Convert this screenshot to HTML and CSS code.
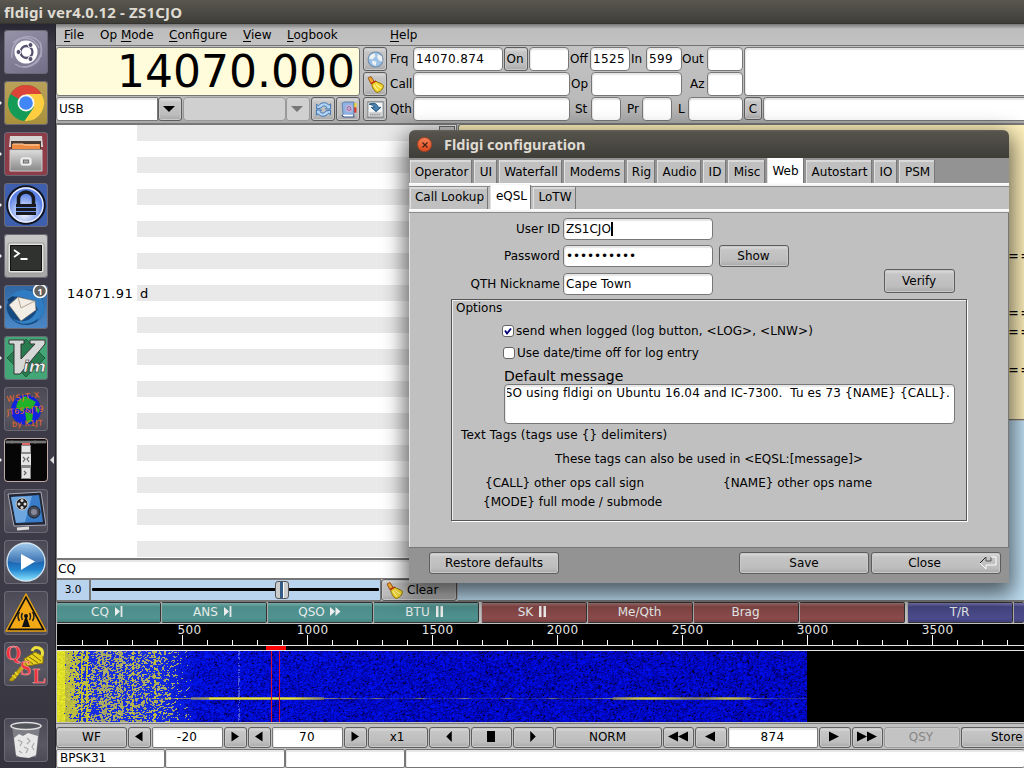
FILE: index.html
```html
<!DOCTYPE html>
<html lang="en">
<head>
<meta charset="utf-8">
<title>fldigi ver4.0.12 - ZS1CJO</title>
<link rel="stylesheet" href="styles.css">
</head>
<body>
<svg width="0" height="0" class="defs" aria-hidden="true">
  <defs>
    <symbol id="broom" viewBox="0 0 16 16">
      <path d="M1 1.800L3.800.5l3 4.800L3.500 7z" fill="#f2a52a" stroke="#8f4a10" stroke-width=".8"/>
      <path d="M4.300 7l4-2.200C10 6.500 13.500 6.500 15.500 9c0 3-2.500 5.800-6 6.500C7 14.500 4.800 11 4.300 7z" fill="#f1d52c" stroke="#8b6d08" stroke-width=".9"/>
      <path d="M6.500 8.500c1 2 2 3.500 4 5M8.500 7.500c1.500 2 3 3 5 3.500" stroke="#fff8a8" stroke-width="1" fill="none"/>
      <path d="M4 7.200l4.300-2.500" stroke="#c22a12" stroke-width="1.300"/>
    </symbol>
    <symbol id="left" viewBox="0 0 8 10"><path d="M7.500 0v10L0 5z"/></symbol>
    <symbol id="right" viewBox="0 0 8 10"><path d="M.5 0v10L8 5z"/></symbol>
    <linearGradient id="play" x2="0" y2="1"><stop offset="0" stop-color="#8fc1ea"/><stop offset=".45" stop-color="#1d5ea8"/><stop offset=".7" stop-color="#2384cf"/><stop offset="1" stop-color="#8ee8ff"/></linearGradient>
    <linearGradient id="cab" x2="0" y2="1"><stop offset="0" stop-color="#ddd"/><stop offset="1" stop-color="#888"/></linearGradient>
    <radialGradient id="lockbg" cx=".45" cy=".7"><stop offset="0" stop-color="#fff"/><stop offset="1" stop-color="#5b83e6"/></radialGradient>
  </defs>
</svg>
<div class="titlebar">fldigi ver4.0.12 - ZS1CJO</div>
<div class="desktop">
  <nav class="launcher">
    <div class="tile t-dash"><svg viewBox="0 0 44 44"><g fill="none" stroke="#b9b5ca" stroke-width="1.500" opacity=".7"><path d="M8 28C6 12 20 2 32 9c6 4 6 10 5 18"/><path d="M36 12c5 12-4 25-17 25"/><path d="M9 13C18 4 31 8 35 18M11 34c10 7 24 1 26-10"/></g><circle cx="22" cy="22" r="11.500" fill="#fff"/><circle cx="22.500" cy="22" r="6" fill="none" stroke="#56506d" stroke-width="2.300"/><g fill="#56506d" stroke="#fff"><circle cx="14.500" cy="22" r="2.500"/><circle cx="26.500" cy="15" r="2.500"/><circle cx="26.500" cy="29" r="2.500"/></g></svg></div>
    <div class="tile t-chrome run"><svg viewBox="0 0 44 44"><circle cx="22" cy="22" r="18" fill="#149b57"/><path d="M22 22L6.400 13A18 18 0 0 1 37.600 13z" fill="#db4437"/><path d="M22 13h15.600A18 18 0 0 1 20.500 40l9.300-13.500z" fill="#ffcd40"/><path d="M7 15.500L14 27l5 9" fill="none" stroke="#149b57" stroke-width="3"/><circle cx="22" cy="22" r="8.500" fill="#f5f5f5"/><circle cx="22" cy="22" r="6.800" fill="#4285f4"/></svg></div>
    <div class="tile t-files run"><svg viewBox="0 0 44 44"><path d="M6 4h32l1 11H5z" fill="#d5d5d3"/><path d="M7 9h30v9H7z" fill="#4b3b33"/><path d="M8 12h28v5H8z" fill="#ed8b43"/><path d="M9 12h10l2 1h14" stroke="#ffd9ad" fill="none"/><path d="M6 18h32v21H6z" fill="url(#cab)" stroke="#ccc"/><rect x="17" y="26" width="10" height="7" rx="1.500" fill="#ddd" stroke="#fff"/><rect x="19.500" y="28" width="5" height="3" fill="#aaa" stroke="#555" stroke-width=".7"/></svg></div>
    <div class="tile t-lock run"><svg viewBox="0 0 44 44"><circle cx="22" cy="22" r="18.800" fill="url(#lockbg)" stroke="#10131a" stroke-width="2"/><circle cx="22" cy="22" r="17" fill="none" stroke="#eef" stroke-width="1.300"/><path d="M14.500 21v-5a7.500 7 0 0 1 15 0v5" fill="none" stroke="#181a20" stroke-width="3.500"/><path d="M12 21h20v11H12z" fill="#181a20"/><path d="M12 24.500h20M12 28.500h20" stroke="#6d90e9" stroke-width="1"/></svg></div>
    <div class="tile t-term run"><svg viewBox="0 0 44 44"><rect x="4" y="9" width="36" height="30" rx="2" fill="#e4e4e1" stroke="#999"/><rect x="6.500" y="11.500" width="31" height="25" fill="#303230" stroke="#111"/><path d="M10 16l5 3.500L10 23M16.500 25h7" fill="none" stroke="#fff" stroke-width="1.800"/></svg></div>
    <div class="tile t-mail run"><svg viewBox="0 0 44 44"><path d="M3 20C7 5 26 0 36 10c6 8 6 20-2 26-9 7-22 4-27-3-3-4-5-8-4-13z" fill="#164a82"/><path d="M6 12C14 2 30 3 38 14c4 8 3 17-5 23 3-9 2-16-7-21-7-5-14-5-20-4z" fill="#2f7cc2"/><path d="M5 20L14 12l17 4 1 9-15 11z" fill="#f2eee5" stroke="#776c60" stroke-width=".6"/><path d="M14 12l3 11 14-7" fill="none" stroke="#b2a48e"/><path d="M8 33c9 6 20 4 25-8l4 3c-3 11-20 15-29 5z" fill="#3382c6"/><path d="M3 15l6-4 2 2-5 4z" fill="#123a66"/><circle cx="36" cy="6" r="6.500" fill="#63615e" stroke="#fff" stroke-width="1.500"/><text x="36" y="9.500" class="badge">1</text></svg></div>
    <div class="tile t-vim run"><svg viewBox="0 0 44 44"><path d="M22 3l19 19-19 19L3 22z" fill="#287b4e" stroke="#1b4830" stroke-width=".7"/><path d="M5 4h15v4h-3v15L31 8h-5V4h15v4L16 38h-6V8H5z" fill="#d6d8d7" stroke="#333" stroke-width="1"/><text x="19" y="36" class="vim" textLength="23" lengthAdjust="spacingAndGlyphs">im</text></svg></div>
    <div class="tile"><svg viewBox="0 0 44 44"><circle cx="22" cy="23" r="15" fill="#1023df"/><path d="M14 14l7-5 11 6-4 7-7-1-3 4-6-5zM21 25l8 2-1 7-5 3zM31 18l5 5-2 4z" fill="#20b32a"/><g class="wsjt"><text x="3" y="15" transform="rotate(-8 3 15)" textLength="33">WSJT-X</text><text x="3" y="28" transform="rotate(-6 3 28)" textLength="37">JT65&amp;JT9</text><text x="8" y="40" transform="rotate(-3 8 40)" textLength="31">by K1JT</text></g></svg></div>
    <div class="tile t-fldigi run active"><svg viewBox="0 0 44 44"><path d="M2 3h40v2H2zM8 2v4M31 2v4" fill="#777" stroke="#777" stroke-width=".7"/><path d="M17 7h10v34H17z" fill="#888"/><path d="M18 8h8v6h-8zM17 16h10v11H17zM18 30h8v10h-8z" fill="#e4e4e4"/><path d="M19 19l2 2-2 3M25 19l-2 2 2 3M20 33l2 2-2 2" stroke="#666" fill="none" stroke-width="1.200"/><path d="M18 5h8v2h-8z" fill="#d66"/></svg></div>
    <div class="tile"><svg viewBox="0 0 44 44"><path d="M4 5l33-2 5 33-32 1z" fill="#222733" stroke="#aab"/><path d="M7 8l28-2 4 27-27 1z" fill="#397cc9"/><path d="M7 8l21-1-7 26-9 1z" fill="#6ea6df"/><circle cx="18" cy="15" r="6" fill="#222" stroke="#ccc"/><g fill="#ddd"><circle cx="18" cy="11.500" r="1.500"/><circle cx="21" cy="15" r="1.500"/><circle cx="18" cy="18.500" r="1.500"/><circle cx="15" cy="15" r="1.500"/></g><circle cx="30" cy="23" r="6" fill="#454b58" stroke="#1b1f2a"/><circle cx="30" cy="23" r="3" fill="#889"/><path d="M13 40l12-1" stroke="#ddd" stroke-width="3"/></svg></div>
    <div class="tile"><svg viewBox="0 0 44 44"><circle cx="22" cy="22" r="19" fill="url(#play)" stroke="#d0e2ef" stroke-width="1.300"/><path d="M4 21a18 18 0 0 1 36 0c-12 3-24 3-36 0z" fill="#fff" opacity=".18"/><path d="M17 14l14 7.500L17 30z" fill="#fff"/></svg></div>
    <div class="tile"><svg viewBox="0 0 44 44"><path d="M22 3l20 37H2z" fill="#111" stroke="#e7a013" stroke-width="1.500" stroke-linejoin="round"/><path d="M22 8l16 29.500H6z" fill="#f3a916"/><path d="M22 24l4 12h-8z" fill="#111"/><circle cx="22" cy="25" r="2" fill="#111"/><path d="M18.500 22q-2 3 0 7M15.500 21q-3 4 0 9M25.500 22q2 3 0 7M28.500 21q3 4 0 9" fill="none" stroke="#222" stroke-width="1.500"/></svg></div>
    <div class="tile"><svg viewBox="0 0 44 44"><path d="M5 38l17-20 3 3L9 39l-3 0z" fill="#c4a917" stroke="#7a6909" stroke-width=".6"/><path d="M8 33l4 3M11 30l3 3" stroke="#ecd92c" stroke-width="1.500"/><path d="M20 17L31 10l8 4v7l-10 2-6 1z" fill="#e7cf1c" stroke="#8c7b0c"/><path d="M28 9q2-5 7-3t3 8" fill="none" stroke="#ede03b" stroke-width="3"/><path d="M22 17l7 5M25 15l9 6M28 12l9 7" stroke="#776909"/><g class="qsl"><text x="1.500" y="18">Q</text><text x="16" y="33">S</text><text x="28.500" y="41">L</text></g></svg></div>
    <div class="tile trash"><svg viewBox="0 0 44 44"><path d="M8 8l4 31h20l4-31z" fill="#929198" opacity=".7"/><ellipse cx="22" cy="8" rx="15" ry="3.500" fill="#54545b" stroke="#ddd" stroke-width="1.600"/><path d="M10 20l5-4 4 2 5-3 10 3-2 19-7 3-9-1-4-2z" fill="#e7e7e7"/><path d="M14 22l4 2-2 4M23 20l3 3-3 3M20 29l4 2-2 4M30 25l-2 4 2 3M15 33l3 2" fill="none" stroke="#aaa" stroke-width="1.200"/></svg></div>
  </nav>
  <main class="app">
    <div class="menu">
      <span class="m1"><u>F</u>ile</span><span class="m2">Op <u>M</u>ode</span><span class="m3"><u>C</u>onfigure</span><span class="m4"><u>V</u>iew</span><span class="m5"><u>L</u>ogbook</span><span class="m6"><u>H</u>elp</span>
    </div>
    <div class="toolbar">
      <div class="rigpane">
        <div class="freq">14070.000</div>
        <div class="rigrow">
          <div class="field usb">USB</div><div class="btn drop"><svg viewBox="0 0 12 6"><path d="M0 0h12L6 6z"/></svg></div>
          <div class="field off combo"></div><div class="btn drop off"><svg viewBox="0 0 12 6"><path d="M0 0h12L6 6z" fill="#777"/></svg></div>
          <div class="btn sq"><svg viewBox="0 0 16 16"><g fill="#b4d5f5" stroke="#2a64a8" stroke-width=".8"><path d="M1.500 7.500V3L3.300 4.500C6 .8 10.800.8 13 4l1.700-1.300v4.800H9.800L11.300 6C9.500 4 7 4.300 5.800 6.500z"/><path d="M14.500 8.500V13l-1.800-1.500c-2.700 3.700-7.500 3.700-9.700.5l-1.700 1.300V8.500h4.900L4.700 10c1.800 2 4.300 1.700 5.500-.5z"/></g></svg></div>
          <div class="btn sq"><svg viewBox="0 0 16 16"><path d="M13 2h2.500v4H13z" fill="#f1d530"/><path d="M13 6h2.500v5H13z" fill="#d93829"/><path d="M2 2l2-1h9v12l-10 1z" fill="#8fb2e2" stroke="#5877a8" stroke-width=".8"/><path d="M2 13q0 2 2 2h9v-2" fill="#fff" stroke="#355489"/><circle cx="8.500" cy="7" r="3.500" fill="#c0b4dc"/><path d="M9.800 8.300a1.800 1.800 0 1 1 0-2.500v2.500h1" fill="none" stroke="#995784" stroke-width=".8"/></svg></div>
        </div>
      </div>
      <div class="sidebtns">
        <div class="btn sq"><svg viewBox="0 0 16 16"><circle cx="8" cy="8" r="7" fill="#9cc1e6" stroke="#6f8cae"/><path d="M3 4l4-2 1 3-3 3-3-1zM5 9l4 1-1 4-3-2zM10 3l4 2 .5 5-3-1-2-3z" fill="#f0f2f0"/></svg></div>
        <div class="btn sq"><svg><use href="#broom"/></svg></div>
        <div class="btn sq"><svg viewBox="0 0 16 16"><path d="M.8.8h14.400v14.400H.8z" fill="#f3f5f6" stroke="#7c8386"/><path d="M2 10.500h12v3.500H2z" fill="#ccc"/><path d="M2 3c5-2 8 0 8.500 3H13L8.500 10 4 6h3C6 4 4.500 3.500 2 3z" fill="#4a83b2" stroke="#16486e" stroke-width=".8"/><path d="M3 13h10" stroke="#777" stroke-dasharray="1 1"/></svg></div>
      </div>
      <div class="qso">
        <div class="qrow"><label class="l1">Frq</label><div class="field num w90">14070.874</div><div class="btn on">On</div><div class="field w40"></div><label class="l2">Off</label><div class="field num w40">1525</div><label class="l3">In</label><div class="field num w35">599</div><label class="l4">Out</label><div class="field w35b"></div></div>
        <div class="qrow"><label class="l1">Call</label><div class="field w157"></div><label class="l5">Op</label><div class="field w91"></div><label class="l6">Az</label><div class="field w35b"></div></div>
        <div class="qrow"><label class="l1">Qth</label><div class="field w157"></div><label class="l7">St</label><div class="field w30"></div><label class="l8">Pr</label><div class="field w30"></div><label class="l9">L</label><div class="field w54"></div></div>
      </div>
      <div class="notes"><div class="field notebox"></div><div class="noterow"><div class="btn cbtn">C</div><div class="field grow"></div></div></div>
    </div>
    <div class="workspace">
      <div class="browser"><div class="stripes"></div><div class="entry"><span class="ef">14071.91</span><span>d</span></div><div class="scroll"></div></div>
      <div class="textpanes"><div class="rx"><span>==</span><span class="g2">==</span><span>==</span><span class="g3">==</span></div><div class="tx"></div></div>
    </div>
    <div class="lower">
      <div class="signal"><div class="field cq">CQ</div><div class="squelch"><div class="val">3.0</div><div class="slider"><i></i><b></b></div><div class="btn clear"><svg><use href="#broom"/></svg>Clear</div></div></div>
      <div class="txlow"></div>
    </div>
    <div class="macros">
      <div class="mac teal">CQ<svg viewBox="0 0 9 11"><path d="M1 1v9l5-4.500z"/><path d="M7.500 0v11" stroke="#e8e8e8" stroke-width="1.800"/></svg></div><div class="mac teal">ANS<svg viewBox="0 0 9 11"><path d="M1 1v9l5-4.500z"/><path d="M7.500 0v11" stroke="#e8e8e8" stroke-width="1.800"/></svg></div><div class="mac teal">QSO<svg class="wide" viewBox="0 0 11 11"><path d="M0 1v9l5-4.500zM5.500 1v9l5-4.500z"/></svg></div><div class="mac teal">BTU<svg viewBox="0 0 9 11"><path d="M1 0h2.500v11H1zM5.500 0H8v11H5.500z"/></svg></div>
      <div class="mac red gap">SK<svg viewBox="0 0 9 11"><path d="M1 0h2.500v11H1zM5.500 0H8v11H5.500z"/></svg></div><div class="mac red">Me/Qth</div><div class="mac red">Brag</div><div class="mac red"></div>
      <div class="mac blue gap">T/R</div><div class="mac blue rest"></div>
    </div>
    <div class="scale"><div class="hz"><span class="first">500</span><span>1000</span><span>1500</span><span>2000</span><span>2500</span><span>3000</span><span>3500</span></div><div class="minor"></div><div class="major"></div></div>
    <div class="marker"><i></i></div>
    <canvas id="waterfall" width="967" height="71"></canvas>
    <div class="controls">
      <div class="btn c72">WF</div><div class="btn c23"><svg><use href="#left"/></svg></div><div class="field c72">-20</div><div class="btn c23"><svg><use href="#right"/></svg></div><div class="btn c23"><svg><use href="#left"/></svg></div><div class="field c72">70</div><div class="btn c23"><svg><use href="#right"/></svg></div><div class="btn c59">x1</div><div class="btn c41"><svg viewBox="0 0 8 12"><path d="M7 0v12L1 6z"/></svg></div><div class="btn c41"><svg viewBox="0 0 8 11"><path d="M0 0h8v11H0z"/></svg></div><div class="btn c41"><svg viewBox="0 0 8 12"><path d="M1 0v12l6-6z"/></svg></div><div class="btn c107">NORM</div><div class="btn c31"><svg class="dbl" viewBox="0 0 20 10"><path d="M10 0v10L0 5zM20 0v10L10 5z"/></svg></div><div class="btn c32"><svg class="fat" viewBox="0 0 10 10"><path d="M10 0v10L0 5z"/></svg></div><div class="field c90">874</div><div class="btn c32"><svg class="fat" viewBox="0 0 10 10"><path d="M0 0v10l10-5z"/></svg></div><div class="btn c31"><svg class="dbl" viewBox="0 0 20 10"><path d="M0 0v10l10-5zM10 0v10l10-5z"/></svg></div><div class="btn c76 disabled">QSY</div><div class="btn c92">Store</div>
    </div>
    <div class="status"><div class="field s1">BPSK31</div><div class="field s2"></div><div class="field s2"></div><div class="field grow"></div></div>
  </main>
</div>

<section class="dialog">
  <header><span class="x"><svg viewBox="0 0 8 8"><path d="M1.500 1.500l5 5M6.500 1.500l-5 5"/></svg></span>Fldigi configuration</header>
  <div class="tabs top"><span class="w62">Operator</span><span class="w23">UI</span><span class="w63">Waterfall</span><span class="w61">Modems</span><span class="w28">Rig</span><span class="w44">Audio</span><span class="w23">ID</span><span class="w36">Misc</span><span class="w37 sel">Web</span><span class="w66">Autostart</span><span class="w23">IO</span><span class="w35">PSM</span></div>
  <div class="strip"></div>
  <div class="tabs sub"><span class="w78">Call Lookup</span><span class="w41 sel">eQSL</span><span class="w43">LoTW</span></div>
  <div class="strip"></div>
  <div class="page">
    <div class="form">
      <div class="frow"><label>User ID</label><div class="field">ZS1CJO<i class="caret"></i></div></div>
      <div class="frow"><label>Password</label><div class="field dots">••••••••••</div><div class="btn show">Show</div></div>
      <div class="frow"><label>QTH Nickname</label><div class="field nick">Cape Town</div><div class="btn verify">Verify</div></div>
    </div>
    <div class="group">
      <p class="legend">Options</p>
      <p class="check"><span class="box"><svg viewBox="0 0 8 8"><path d="M1 3.500l2 3L7 1.500" /></svg></span><span class="ls1">send when logged (log button, &lt;LOG&gt;, &lt;LNW&gt;)</span></p>
      <p class="check second"><span class="box"></span><span>Use date/time off for log entry</span></p>
      <p class="defmsg">Default message</p>
      <div class="field message"><span>SO using fldigi on Ubuntu 16.04 and IC-7300.&nbsp; Tu es 73 {NAME} {CALL}.</span></div>
      <p class="tags">Text Tags (tags use {} delimiters)</p>
      <p class="also">These tags can also be used in &lt;EQSL:[message]&gt;</p>
      <p class="pair"><span>{CALL} other ops call sign</span><span>{NAME} other ops name</span></p>
      <p class="mode">{MODE} full mode / submode</p>
    </div>
  </div>
  <footer><div class="btn">Restore defaults</div><div class="btn save">Save</div><div class="btn close">Close<svg viewBox="0 0 18 14"><path d="M7 13L1 7l6-6" fill="none" stroke="#222"/><path d="M7 1v4h5V1" fill="none" stroke="#555"/><path d="M12 1h5v8H7v4L1 7" fill="none" stroke="#fff"/></svg></div></footer>
</section>
<script src="waterfall.js"></script>
</body>
</html>
```
FILE: styles.css
```css
* { box-sizing: border-box; }
html { overflow: hidden; }
body { margin: 0; width: 1024px; height: 768px; overflow: hidden; position: relative; font: 12px/16px "DejaVu Sans", sans-serif; color: #000; background: #c0c0c0; }
p { margin: 0; }
.defs { position: absolute; }
.titlebar { height: 24px; padding-left: 4px; font: bold 15px/24px "Noto Sans", sans-serif; letter-spacing: .18px; color: #dfdbd2; background: linear-gradient(#59574f, #3f3e39 95%, #2d2c29); }
.desktop { display: flex; height: 744px; }

.launcher { width: 56px; flex: none; padding: 6px 0 0 4px; display: flex; flex-direction: column; gap: 7px; background: linear-gradient(#282632, #3b3945 20px, #3d3b47 600px, #35333d); border-right: 1px solid #25242b; }
.tile { width: 44px; height: 44px; flex: none; border-radius: 4px; background: linear-gradient(#4a4955, #5a5963 60%, #4a4955); box-shadow: inset 0 0 0 1px #6b6a74; position: relative; }
.tile svg { width: 44px; height: 44px; display: block; }
.t-dash { background: linear-gradient(150deg, #9793a8, #716d88); }
.t-chrome { background: linear-gradient(#b9a25a, #a9903c); }
.t-files { background: #8f3c49; }
.t-lock { background: #3d5fae; }
.t-term { background: linear-gradient(#c9c9c9, #a5a5a5); }
.t-mail { background: linear-gradient(#2f67a4, #4b88c5); }
.t-vim { background: #43a676; }
.t-fldigi { background: #060606; box-shadow: inset 0 0 0 1px #c0a9a9; }
.run::before { content: ""; position: absolute; left: -4px; top: 20px; border: 2px solid transparent; border-left-color: #eee; }
.active::after { content: ""; position: absolute; left: 46px; top: 18px; border: 4px solid transparent; border-left: 0; border-right-color: #ddd; }
.trash { margin-top: 25px; }
.badge { font: bold 9px "Noto Sans", sans-serif; fill: #fff; text-anchor: middle; }
.vim { font: italic bold 15px "DejaVu Sans", sans-serif; fill: #eee; stroke: #222; stroke-width: .5px; }
.wsjt { font: 8px "DejaVu Sans", sans-serif; fill: #ee672b; }
.qsl { font: bold 20px "Liberation Serif", serif; fill: #f2303d; stroke: #f7b5b5; stroke-width: .4px; }

.app { width: 968px; display: flex; flex-direction: column; background: #c0c0c0; overflow: hidden; }
.menu { height: 22px; flex: none; display: flex; padding-left: 8px; line-height: 22px; background: linear-gradient(#777, #bdbdbd 5px, #c2c2c2); border-bottom: 1px solid #717171; }
.menu u { text-underline-offset: 2px; }
.m1 { width: 36px; } .m2 { width: 69px; } .m3 { width: 74px; } .m4 { width: 44px; } .m5 { width: 103px; }

.field { background: #fff; border: 1px solid #777; border-radius: 4px; box-shadow: inset 1px 2px 1px #e6e6e6; padding-left: 2px; display: flex; align-items: center; white-space: pre; flex: none; overflow: hidden; }
.btn { background: linear-gradient(#dedede, #c5c5c5 20%, #bdbdbd 75%, #a8a8a8); border: 1px solid #5d5d5d; border-radius: 3px; box-shadow: inset 0 0 0 1px #c9c9c9; display: flex; align-items: center; justify-content: center; flex: none; }
.num { letter-spacing: .36px; }
.field.grow { flex: 1; border-right: 0; border-radius: 4px 0 0 4px; }

.toolbar { height: 77px; flex: none; display: flex; padding-top: 1px; background: linear-gradient(#c3c3c3, #bababa 70%, #a9a9a9); }
.rigpane { width: 304px; }
.freq { height: 49px; border: 1px solid #777; border-radius: 3px; background: #fffcdc; font-size: 44px; line-height: 48px; text-align: right; padding-right: 4px; }
.rigrow { display: flex; height: 24px; margin-top: 1px; }
.usb { width: 102px; border-radius: 3px 0 0 3px; }
.drop { width: 24px; padding-right: 2px; } .drop svg { width: 12px; height: 6px; }
.combo { width: 103px; margin-left: 1px; }
.off { background: #d0d0d0; border-color: #999; box-shadow: none; }
.sq { width: 24px; height: 24px; margin-left: 1px; } .sq svg { width: 17px; height: 17px; }
.sidebtns { width: 28px; padding-left: 2px; display: flex; flex-direction: column; gap: 1px; }
.qso { width: 355px; display: flex; flex-direction: column; gap: 1px; }
.qrow { display: flex; height: 24px; align-items: center; }
.qrow .field { height: 24px; }
.qrow label { flex: none; padding-left: 1px; white-space: nowrap; }
.qrow .l1 { width: 25px; padding-left: 2px; }
.w90 { width: 90px; } .on { width: 24px; height: 24px; margin: 0 1px; padding-right: 2px; } .w40 { width: 40px; } .l2 { width: 21px; } .l3 { width: 16px; }
.w35 { width: 36px; } .l4 { width: 25px; } .qrow .l4 { padding-left: 0; } .w35b { width: 36px; }
.w157 { width: 157px; } .l5 { width: 21px; } .w91 { width: 91px; } .l6.l6 { width: 25px; padding-left: 8px; }
.l7.l7 { width: 21px; padding-left: 5px; } .w30 { width: 30px; } .l8.l8 { width: 21px; padding-left: 6px; } .l9.l9 { width: 16px; padding-left: 6px; } .w54 { width: 55px; }
.notes { flex: 1; padding-left: 1px; display: flex; flex-direction: column; }
.notebox { height: 49px; border-right: 0; border-radius: 4px 0 0 4px; }
.noterow { display: flex; height: 24px; margin-top: 1px; gap: 1px; }
.cbtn { width: 18px; height: 23px; }

.workspace { height: 436px; flex: none; display: flex; border-top: 1px solid #777; }
.browser { width: 401px; height: 435px; flex: none; position: relative; background: #fff; border: 1px solid #777; }
.stripes { height: 433px; margin-left: 80px; background: repeating-linear-gradient(#e9e9e9 0 16px, #fff 16px 32px); }
.entry { position: absolute; top: 160px; left: 10px; font-size: 13px; display: flex; line-height: 17px; }
.ef { width: 73px; letter-spacing: .55px; }
.scroll { position: absolute; right: 1px; top: 1px; width: 16px; height: 16px; border: 1px solid #666; background: #c4c4c4; }
.textpanes { width: 566px; margin-left: 1px; display: flex; flex-direction: column; }
.rx { height: 296px; border: 1px solid #777; border-right: 0; border-radius: 3px 0 0 0; background: #fff1bc; padding: 122px 0 0 550px; font: 15px/19px "DejaVu Sans Mono", monospace; display: flex; flex-direction: column; overflow: hidden; }
.g2 { margin-top: 38px; } .g3 { margin-top: 19px; }
.rx span { width: 15px; overflow: hidden; letter-spacing: 3px; }
.tx { flex: 1; margin-top: 1px; background: #c0e0f4; }

.lower { height: 42px; flex: none; display: flex; }
.signal { width: 402px; }
.cq { height: 20px; border-radius: 0; padding-left: 1px; }
.squelch { display: flex; height: 22px; }
.val { width: 34px; background: #b9d2ee; border: 1px solid #777; font-size: 10.5px; text-align: center; line-height: 19px; }
.slider { width: 291px; background: #b9d2ee; border: 1px solid #777; position: relative; padding: 8px 1px; }
.slider i { display: block; height: 3px; background: #000; border-radius: 1px; }
.slider b { position: absolute; left: 184px; top: 1px; width: 14px; height: 18px; border: 1px solid #555; border-radius: 3px; background: linear-gradient(90deg, transparent 4px, #355b87 4px 7px, #fff 7px 8px, transparent 8px), #ccc; }
.clear { width: 76px; justify-content: flex-start; padding-left: 4px; gap: 4px; } .clear svg { width: 17px; height: 17px; }
.txlow { flex: 1; background: #c0e0f4; border-bottom: 1px solid #777; }

.macros { height: 23px; flex: none; display: flex; border-top: 1px solid #777; }
.mac { width: 106px; height: 21px; flex: none; border: 1px solid #333; border-left-color: #aaa; border-radius: 2px; color: #e6ebeb; display: flex; align-items: center; justify-content: center; gap: 5px; padding: 0 1px 2px 0; }
.mac:first-child { width: 105px; }
.mac.rest { flex: 1; border-right: 0; }
.mac svg { width: 9px; height: 11px; fill: #eee; margin-right: 2px; } .mac .wide { width: 11px; margin-right: 0; }
.teal { background: linear-gradient(#79aaa8, #4d8e8a 20%, #509391 80%, #478481); }
.red { background: linear-gradient(#a27474, #854646 20%, #8a4b4b 80%, #7b4141); }
.blue { background: linear-gradient(#7979b0, #454583 20%, #4c4c8c 80%, #40407c); }
.gap { margin-left: 2px; }

.scale { height: 22px; flex: none; margin-left: 1px; background: #000; color: #e6e6e6; border-bottom: 1px solid #e4e4e4; position: relative; overflow: hidden; }
.hz { display: flex; margin-left: 68px; line-height: 13px; } .hz span { width: 125px; flex: none; text-align: center; letter-spacing: .3px; }
.hz .first { padding-left: 4px; }
.minor, .major { position: absolute; right: 0; bottom: 0; }
.minor { left: 25px; height: 5px; background: repeating-linear-gradient(90deg, #fff 0 1px, transparent 1px 25px); }
.major { left: 125px; height: 10px; background: repeating-linear-gradient(90deg, #fff 0 1px, transparent 1px 125px); }
.marker { height: 5px; flex: none; margin-left: 1px; background: #000; border-bottom: 1px solid #e4e4e4; } .marker i { display: block; width: 20px; height: 4px; margin-left: 209px; background: #f00; }
canvas { display: block; width: 967px; height: 71px; flex: none; margin-left: 1px; }
.controls { height: 26px; flex: none; margin-top: 1px; padding-top: 3px; border-top: 1px solid #777; display: flex; gap: 1px; overflow: hidden; }
.controls > div { height: 21px; }
.controls .btn { padding: 0 2px 2px 0; }
.controls .field { justify-content: center; border-radius: 2px; padding: 0 1px 2px 0; letter-spacing: .3px; }
.controls .btn:first-child { padding-right: 0; }
.controls svg { width: 8px; height: 11px; } .controls .dbl { width: 20px; } .controls .fat { width: 10px; }
.c72 { width: 71px; } .c23 { width: 23px; } .c59 { width: 60px; } .c41 { width: 41px; } .c107 { width: 107px; } .c31 { width: 31px; } .c32 { width: 32px; } .c90 { width: 90px; } .c76 { width: 76px; }
.controls .c92 { flex: 1; border-right: 0; border-radius: 3px 0 0 3px; justify-content: flex-start; padding-left: 29px; }
.controls .disabled { color: #858585; border-color: #999; background: #c3c3c3; }
.status { height: 20px; flex: none; display: flex; }
.status .field { height: 19px; border-radius: 2px; padding: 0 0 2px 3px; }
.s1 { width: 109px; } .s2 { width: 120px; }

.dialog { position: absolute; left: 409px; top: 130px; width: 600px; height: 453px; border-radius: 6px 6px 0 0; background: #c0c0c0; box-shadow: 0 8px 22px 4px rgba(0, 0, 0, .6); display: flex; flex-direction: column; }
.dialog header { height: 28px; flex: none; border-radius: 6px 6px 0 0; background: linear-gradient(#66645c, #55534b 2px, #3e3d38); color: #dfdbd2; font: bold 14.5px/28px "Noto Sans", sans-serif; display: flex; align-items: center; padding: 0 0 0 8px; gap: 12px; }
.x { width: 15px; height: 15px; margin-top: 1px; border-radius: 50%; background: linear-gradient(#f58055, #df4a1d); border: 1px solid #ad4222; display: flex; align-items: center; justify-content: center; }
.x svg { width: 8px; height: 8px; stroke: #3c2018; fill: none; stroke-width: 1.1; }
.tabs { height: 25px; flex: none; display: flex; align-items: flex-end; gap: 2px; padding-left: 1px; background: #939393; }
.tabs.sub { height: 22px; background: #c0c0c0; }
.tabs span { height: 23px; line-height: 24px; padding-left: 1px; text-align: center; flex: none; background: #c0c0c0; border-right: 1px solid #777; border-left: 1px solid #e0e0e0; box-shadow: inset 0 2px 0 #d9d9d9; white-space: nowrap; }
.tabs.sub span { height: 22px; line-height: 20px; }
.tabs .sel { height: 25px; line-height: 26px; padding-left: 0; background: #fff; box-shadow: none; position: relative; }
.tabs.sub .sel { height: 24px; line-height: 22px; padding-left: 2px; }
.w62 { width: 62px; } .w23 { width: 23px; } .w63 { width: 63px; } .w61 { width: 61px; } .w28 { width: 28px; } .w44 { width: 44px; } .w36 { width: 37px; } .w37 { width: 37px; } .w66 { width: 66px; } .w35 { width: 36px; } .w78 { width: 78px; } .w41 { width: 41px; } .w43 { width: 43px; }
.strip { height: 4px; flex: none; background: linear-gradient(#fff, #eee); border-bottom: 1px solid #8b8b8b; }
.page { flex: 1; border-left: 1px solid #e4e4e4; border-right: 1px solid #777; padding-left: 41px; }
.form { height: 86px; padding-top: 5px; display: flex; flex-direction: column; gap: 5px; }
.frow { display: flex; height: 22px; align-items: center; }
.frow + .frow + .frow { margin-top: 1px; }
.frow label { width: 109px; text-align: right; margin-right: 3px; white-space: nowrap; }
.frow .field { width: 150px; height: 22px; }
.nick { letter-spacing: .1px; }
.dots { letter-spacing: -.08px; }
.caret { width: 2px; height: 14px; background: #000; }
.show { width: 70px; height: 22px; margin-left: 6px; padding-right: 1px; }
.verify { width: 71px; height: 24px; margin: -6px 0 0 171px; padding-right: 1px; }
.group { width: 516px; height: 222px; border: 1px solid #555; box-shadow: inset 1px 1px 0 #eee, 1px 1px 0 #fff; }
.legend { height: 23px; padding-left: 4px; }
.check { height: 16px; padding-left: 50px; display: flex; align-items: center; gap: 2px; white-space: nowrap; }
.ls1 { letter-spacing: .1px; }
.second { margin-top: 6px; padding-left: 51px; }
.box { width: 12px; height: 12px; background: #fff; border: 1px solid #666; border-radius: 3px; display: flex; align-items: center; justify-content: center; }
.box svg { width: 8px; height: 8px; fill: none; stroke: #000078; stroke-width: 1.8; }
.defmsg { font-size: 14px; line-height: 18px; margin-top: 6px; padding-left: 52px; letter-spacing: .06px; }
.message { width: 451px; height: 40px; margin-left: 52px; margin-top: -1px; justify-content: flex-end; align-items: flex-start; padding: 0 4px 0 0; }
.message span { letter-spacing: .13px; width: 443px; display: flex; justify-content: flex-end; overflow: hidden; }
.tags { padding-left: 9px; margin-top: 3px; letter-spacing: .14px; }
.also { padding-left: 103px; margin-top: 8px; }
.pair { display: flex; padding-left: 33px; margin-top: 8px; } .pair span { width: 238px; white-space: nowrap; }
.mode { padding-left: 31px; margin-top: 3px; }
.dialog footer { height: 36px; flex: none; background: #939393; border-top: 1px solid #777; display: flex; padding: 4px 8px 0 20px; }
.dialog footer .btn { width: 130px; height: 22px; }
.save { margin: 0 2px 0 180px; }
.dialog footer .close { position: relative; padding-right: 23px; } .close svg { position: absolute; right: 3px; top: 3px; width: 18px; height: 14px; }
```
FILE: waterfall.js
```js
const canvas = document.getElementById('waterfall');
const ctx = canvas.getContext('2d');
const W = canvas.width, H = canvas.height, BAND = 750, SIGNAL = 47;
const img = ctx.createImageData(W, H);
let seed = 73;
function rnd() {
  seed ^= seed << 13; seed ^= seed >>> 17; seed ^= seed << 5;
  return (seed >>> 0) / 4294967296;
}
// Smoothed noise plane: neighbouring samples are correlated, as FFT bins are.
function plane(spread) {
  const raw = new Float32Array(W * H).map(rnd);
  const out = new Float32Array(W * H);
  for (let i = 0; i < raw.length; i++) {
    const a = raw[i], b = raw[i - 1] ?? 0.5, c = raw[i - W] ?? 0.5;
    out[i] = (a + b * spread + c * spread * 0.6) / (1 + spread * 1.6);
  }
  return out;
}
const strong = plane(0.8), weak = plane(0.6);
const carriers = { 24: 0.75, 25: 0.72, 29: 0.7, 30: 0.66, 75: 0.65, 76: 0.58, 97: 0.6, 98: 0.55 };
// Share of strong (yellow) samples at column x.
function density(x) {
  if (carriers[x]) return carriers[x];
  if (x < 7) return 1;
  if (x < 22) return 0.86 - (x - 7) * 0.022;
  if (x < 34) return 0.46;
  if (x < 66) return 0.53 - 0.09 * Math.sin(x / 2.7);
  if (x < 100) return 0.44;
  if (x < 122) return 0.44 - (x - 100) * 0.007;
  if (x < 134) return 0.2;
  return 0;
}
const bump = (x, centre, width) => Math.exp(-(((x - centre) / width) ** 2));
// Strength of the horizontal burst at column x.
function burst(x) {
  if (x < 85) return 0;
  if (x < 152) return 0.15 + (x - 85) / 120;
  if (x < 235) return 1;
  if (x < 272) return 1 - (x - 235) / 70;
  if (x < 515) return 0.15 + 0.35 * Math.max(0, Math.sin(x / 7)) ** 3 + 0.3 * bump(x, 290, 9);
  return 0.15 + 0.75 * bump(x, 592, 46) + 0.65 * bump(x, 674, 28);
}
for (let y = 0; y < H; y++) {
  for (let x = 0; x < W; x++) {
    const p = y * W + x;
    let r = 0, g = 0, b = 0;
    if (x < BAND) {
      const n = weak[p];
      const base = 212 - 24 * Math.min(1, x / 420);
      b = Math.min(240, Math.max(20, base + (n - 0.5) * 180 - (n < 0.18 ? 60 : 0)));
      g = Math.max(0, (32 - 16 * Math.min(1, x / 420)) * (n - 0.15) * 1.3);
      if (strong[p] < density(x)) {
        const v = (x < 8 ? 200 : x < 34 ? 165 : 145) + n * 45;
        r = v; g = v; b = x < 8 ? 40 : x < 34 ? 65 : 100;
        if (carriers[x]) { r = g = 190; b = 60; }
      } else if (x < 140) {
        const t = Math.min(1, (140 - x) / 40);
        r = 22 * t; g = g * (1 - t) + 45 * t; b = b * (1 - t) + 226 * t;
      }
      if ((x === 181 || x === 182) && strong[p] < 0.5) { r = 70; g = 85; b = 220; }
      const s = burst(x);
      const d = Math.abs(y - SIGNAL);
      if (d === 0 || (d === 1 && s > 0.55)) {
        const k = d ? s * 0.7 : s;
        r = r * (1 - k) + 235 * k; g = g * (1 - k) + 228 * k; b = b * (1 - k) + 50 * k;
      }
      if (x === 214 || x === 222) { r = 215; g = 10; b = 50; }
    }
    const i = p * 4;
    img.data[i] = r; img.data[i + 1] = g; img.data[i + 2] = b; img.data[i + 3] = 255;
  }
}
ctx.putImageData(img, 0, 0);
```
